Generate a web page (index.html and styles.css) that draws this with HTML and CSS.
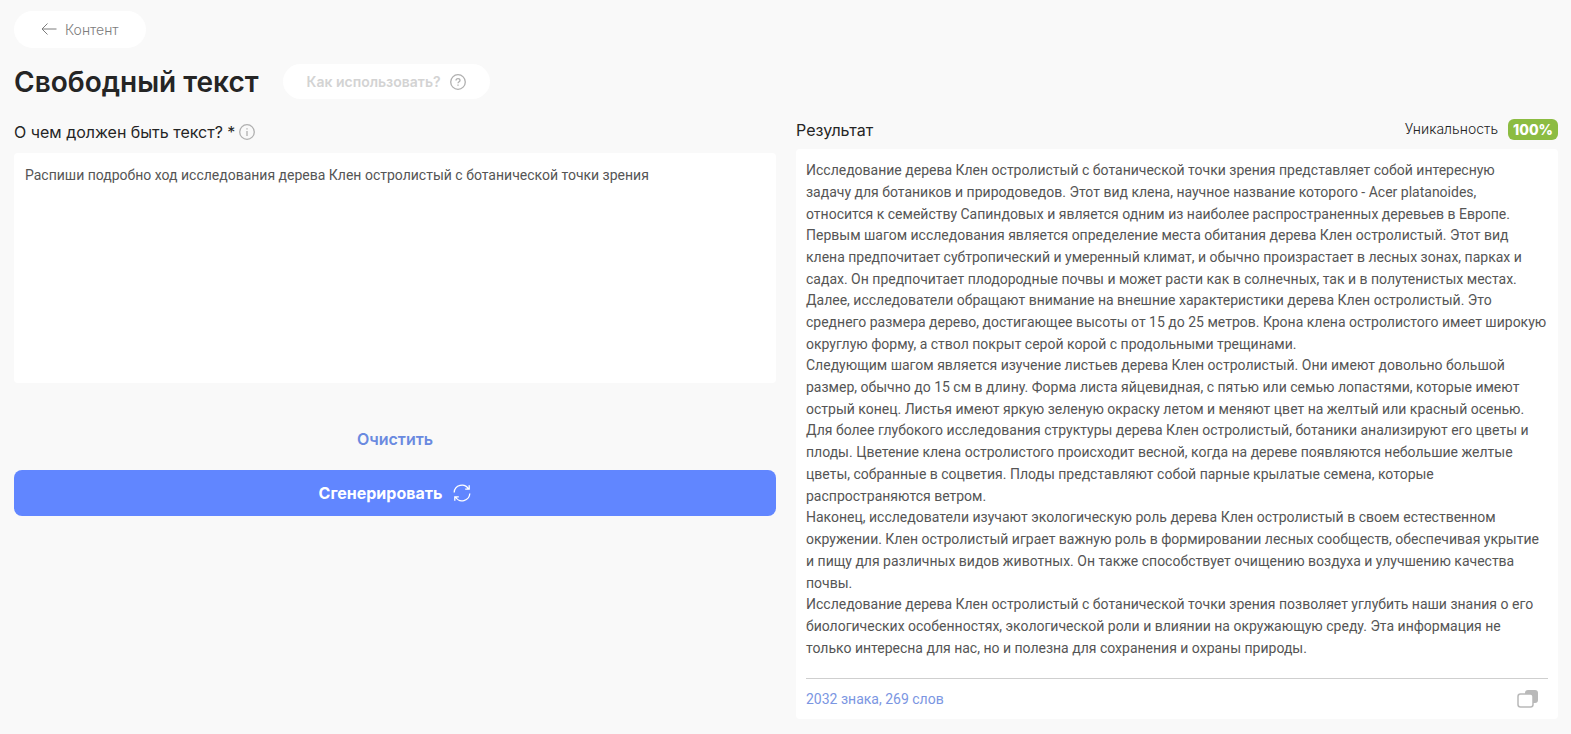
FILE: index.html
```html
<!DOCTYPE html>
<html lang="ru">
<head>
<meta charset="utf-8">
<title>Свободный текст</title>
<link rel="stylesheet" href="styles.css">
</head>
<body>
<main class="page">
  <nav class="nav">
    <a class="back" href="#">
      <svg class="back-icon" viewBox="0 0 16 14" width="16" height="14" aria-hidden="true"><path d="M15.500 6H1M6.500 0.500L1 6L6.500 11.500"/></svg>
      <span>Контент</span>
    </a>
  </nav>
  <header class="heading">
    <h1 class="title">Свободный текст</h1>
    <button class="help" type="button">
      <span>Как использовать?</span>
      <svg class="ring-icon" viewBox="0 0 16 16" width="16" height="16" aria-hidden="true"><circle cx="8" cy="8" r="7.300"/><path d="M6 6.500C6 5.300 6.900 4.600 8 4.600S10 5.300 10 6.400C10 7.700 8 7.700 8 9.300M8 10.600V11.800"/></svg>
    </button>
  </header>
  <div class="columns">
    <form class="column">
      <div class="field-head">
        <label class="label" for="topic">О чем должен быть текст? *</label>
        <svg class="ring-icon info" viewBox="0 0 16 16" width="16" height="16" aria-hidden="true"><circle cx="8" cy="8" r="7.300"/><path d="M8 7V12M8 4.200V5.600"/></svg>
      </div>
      <textarea class="topic" id="topic">Распиши подробно ход исследования дерева Клен остролистый с ботанической точки зрения</textarea>
      <button class="clear" type="reset">Очистить</button>
      <button class="generate" type="button">
        <span>Сгенерировать</span>
        <svg class="refresh-icon" viewBox="0 0 18 18" width="18" height="18" aria-hidden="true"><path d="M1.200 8.500A7.700 7.700 0 0 1 15.500 5M16.200 1.200V5.200H12.200M16.800 9.500A7.700 7.700 0 0 1 2.500 13M1.800 16.800V12.800H5.800"/></svg>
      </button>
    </form>
    <section class="column">
      <div class="result-head">
        <h2 class="label">Результат</h2>
        <div class="unique"><span>Уникальность</span><strong class="badge">100%</strong></div>
      </div>
      <div class="result">
        <div class="text">
<p>Исследование дерева Клен остролистый с ботанической точки зрения представляет собой интересную
задачу для ботаников и природоведов. Этот вид клена, научное название которого - Acer platanoides,
относится к семейству Сапиндовых и является одним из наиболее распространенных деревьев в Европе.</p>
<p>Первым шагом исследования является определение места обитания дерева Клен остролистый. Этот вид
клена предпочитает субтропический и умеренный климат, и обычно произрастает в лесных зонах, парках и
садах. Он предпочитает плодородные почвы и может расти как в солнечных, так и в полутенистых местах.</p>
<p>Далее, исследователи обращают внимание на внешние характеристики дерева Клен остролистый. Это
среднего размера дерево, достигающее высоты от 15 до 25 метров. Крона клена остролистого имеет широкую
округлую форму, а ствол покрыт серой корой с продольными трещинами.</p>
<p>Следующим шагом является изучение листьев дерева Клен остролистый. Они имеют довольно большой
размер, обычно до 15 см в длину. Форма листа яйцевидная, с пятью или семью лопастями, которые имеют
острый конец. Листья имеют яркую зеленую окраску летом и меняют цвет на желтый или красный осенью.</p>
<p>Для более глубокого исследования структуры дерева Клен остролистый, ботаники анализируют его цветы и
плоды. Цветение клена остролистого происходит весной, когда на дереве появляются небольшие желтые
цветы, собранные в соцветия. Плоды представляют собой парные крылатые семена, которые
распространяются ветром.</p>
<p>Наконец, исследователи изучают экологическую роль дерева Клен остролистый в своем естественном
окружении. Клен остролистый играет важную роль в формировании лесных сообществ, обеспечивая укрытие
и пищу для различных видов животных. Он также способствует очищению воздуха и улучшению качества
почвы.</p>
<p>Исследование дерева Клен остролистый с ботанической точки зрения позволяет углубить наши знания о его
биологических особенностях, экологической роли и влиянии на окружающую среду. Эта информация не
только интересна для нас, но и полезна для сохранения и охраны природы.</p>
        </div>
        <footer class="result-foot">
          <span>2032 знака, 269 слов</span>
          <button class="copy" type="button" aria-label="Копировать">
            <svg viewBox="0 0 22 18" width="22" height="18" aria-hidden="true"><rect x="8" y="0" width="13" height="13" rx="3" fill="#b9b9b9"/><rect x="1" y="4" width="15" height="13" rx="2.500" fill="#fff" stroke="#b9b9b9" stroke-width="1.500"/></svg>
          </button>
        </footer>
      </div>
    </section>
  </div>
</main>
</body>
</html>
```
FILE: styles.css
```css
* { box-sizing: border-box; }
body {
  margin: 0;
  background: #f9f9f9;
  color: #252525;
  font: 300 14px/22px Inter, "Open Sans", sans-serif;
}
button { border: 0; background: none; padding: 0; font: inherit; cursor: pointer; }
h1, h2, p { margin: 0; }
svg { display: block; fill: none; flex: none; }
.page { padding: 11px 13px 15px 14px; }
.nav { display: flex; }
.back {
  display: flex;
  align-items: center;
  gap: 8px;
  height: 37px;
  padding: 0 27px;
  border-radius: 19px;
  background: #fff;
  color: #7d7d7d;
  text-decoration: none;
}
.back-icon { stroke: #7d7d7d; }
.heading { display: flex; align-items: flex-start; gap: 24px; margin-top: 16px; }
.title { font-size: 28px; line-height: 36px; font-weight: 600; }
.help {
  display: flex;
  align-items: center;
  gap: 9px;
  height: 35px;
  padding: 0 24px;
  border-radius: 18px;
  background: #fff;
  color: #d3d3d3;
  font-weight: 600;
}
.ring-icon { stroke: #b0b0b0; stroke-width: 1.300; }
.columns {
  display: grid;
  grid-template-columns: minmax(0, 1fr) minmax(0, 1fr);
  gap: 20px;
  align-items: start;
  margin-top: 18px;
}
.column { display: flex; flex-direction: column; }
.field-head { display: flex; align-items: center; gap: 4px; height: 28px; }
.label { font-size: 16px; line-height: 24px; font-weight: 400; }
.topic {
  height: 230px;
  margin-top: 7px;
  padding: 11px;
  border: 0;
  border-radius: 4px;
  background: #fff;
  color: #555;
  font: 400 14px/22px Roboto, sans-serif;
  resize: none;
  outline: 0;
}
.clear {
  align-self: center;
  margin-top: 44px;
  color: #6a8ae0;
  font-size: 16px;
  line-height: 24px;
  font-weight: 600;
}
.generate {
  display: flex;
  align-items: center;
  justify-content: center;
  gap: 11px;
  height: 46px;
  margin-top: 19px;
  border-radius: 8px;
  background: #6186ff;
  color: #fff;
  font-size: 16px;
  font-weight: 700;
}
.refresh-icon { stroke: #fff; stroke-width: 1.300; }
.result-head { display: flex; align-items: center; justify-content: space-between; height: 22px; }
.result-head .label { padding-top: 2px; }
.unique { display: flex; align-items: center; gap: 10px; }
.badge {
  padding: 0 5px;
  border-radius: 6px;
  background: #8cbc42;
  color: #fff;
  line-height: 21px;
  font-weight: 800;
}
.result { margin-top: 9px; padding: 10px 10px 0; border-radius: 4px; background: #fff; }
.text { color: #555; font-family: Roboto, sans-serif; font-weight: 400; }
.text p { white-space: pre-line; }
.text p + p { margin-top: -1px; }
.result-foot {
  display: flex;
  align-items: center;
  justify-content: space-between;
  height: 41px;
  margin-top: 19px;
  padding-right: 9px;
  border-top: 1px solid #cfcfcf;
  color: #7b96e2;
  font-family: Roboto, sans-serif;
  font-weight: 400;
}
```
